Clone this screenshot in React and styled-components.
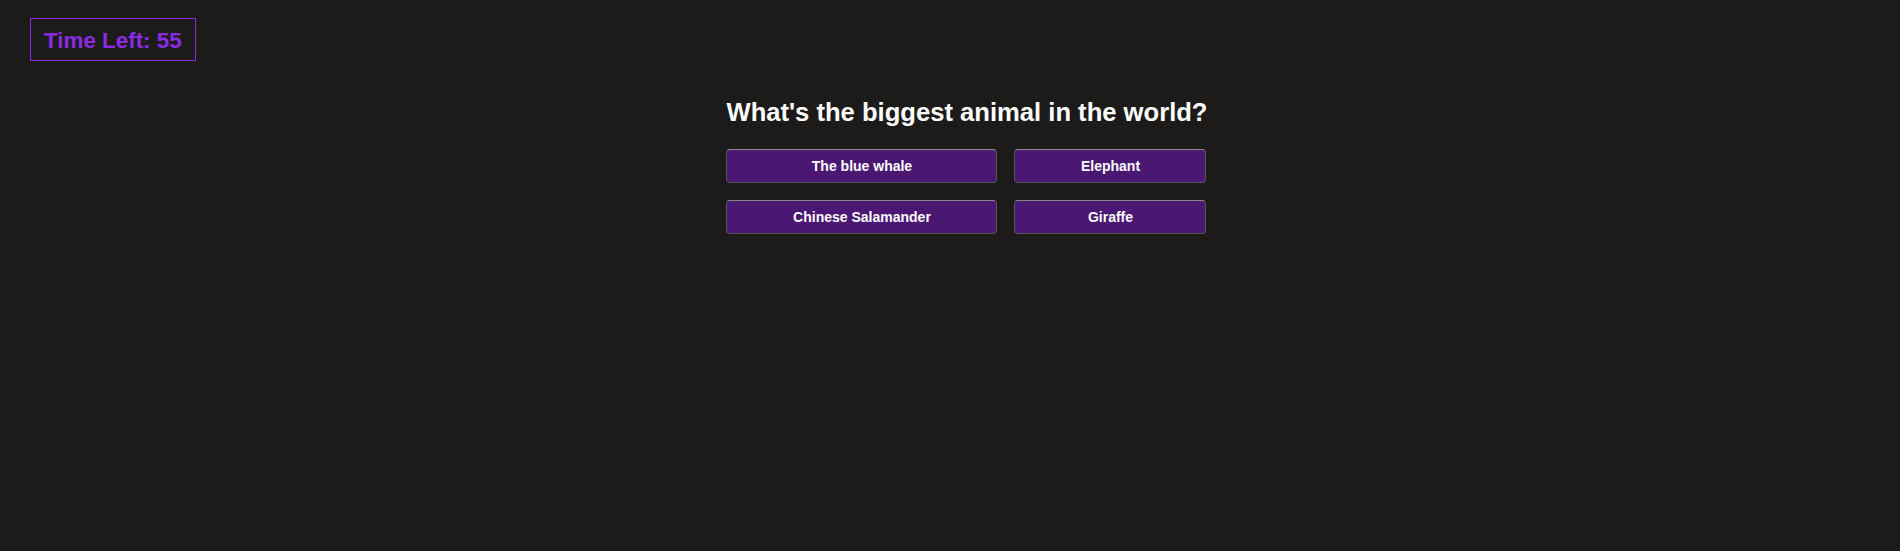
import React from "react";
import styled, { createGlobalStyle } from "styled-components";

const GlobalStyle = createGlobalStyle`
  html, body {
    margin: 0;
    padding: 0;
    background: #1c1b1a;
    font-family: "Liberation Sans", Arial, sans-serif;
  }
  #root {
    min-height: 551px;
    background: #1c1b1a;
  }
`;

const Page = styled.div`
  display: flex;
  flex-direction: column;
  align-items: flex-start;
  padding: 18px 30px;
  box-sizing: border-box;
  min-height: 551px;
`;

const Timer = styled.div`
  border: 1px solid #8a2be2;
  color: #8a2be2;
  font-weight: 700;
  font-size: 22.4px;
  line-height: 25px;
  padding: 9px 13px 7px;
`;

const Game = styled.section`
  align-self: stretch;
  display: flex;
  justify-content: center;
  padding-left: 34px;
  margin-top: 37px;
`;

const Quiz = styled.div`
  display: flex;
  flex-direction: column;
  gap: 22px;
`;

const Question = styled.h2`
  margin: 0;
  color: #ffffff;
  font-size: 25.6px;
  font-weight: 700;
  line-height: 29px;
  white-space: nowrap;
`;

const Answers = styled.div`
  display: grid;
  grid-template-columns: 271px 192px;
  gap: 17px;
`;

const AnswerButton = styled.button`
  height: 34px;
  box-sizing: border-box;
  background: #4a1773;
  color: #ffffff;
  font-family: "Liberation Sans", Arial, sans-serif;
  font-size: 14px;
  font-weight: 700;
  border: 1px solid #555;
  border-top-color: #8a8a8a;
  border-radius: 4px;
  cursor: pointer;
  padding: 0 8px;
`;

const answers = ["The blue whale", "Elephant", "Chinese Salamander", "Giraffe"];

export default function App() {
  return (
    <>
      <GlobalStyle />
      <Page>
        <Timer>Time Left: 55</Timer>
        <Game>
          <Quiz>
            <Question>What's the biggest animal in the world?</Question>
            <Answers>
              {answers.map((a) => (
                <AnswerButton key={a}>{a}</AnswerButton>
              ))}
            </Answers>
          </Quiz>
        </Game>
      </Page>
    </>
  );
}
